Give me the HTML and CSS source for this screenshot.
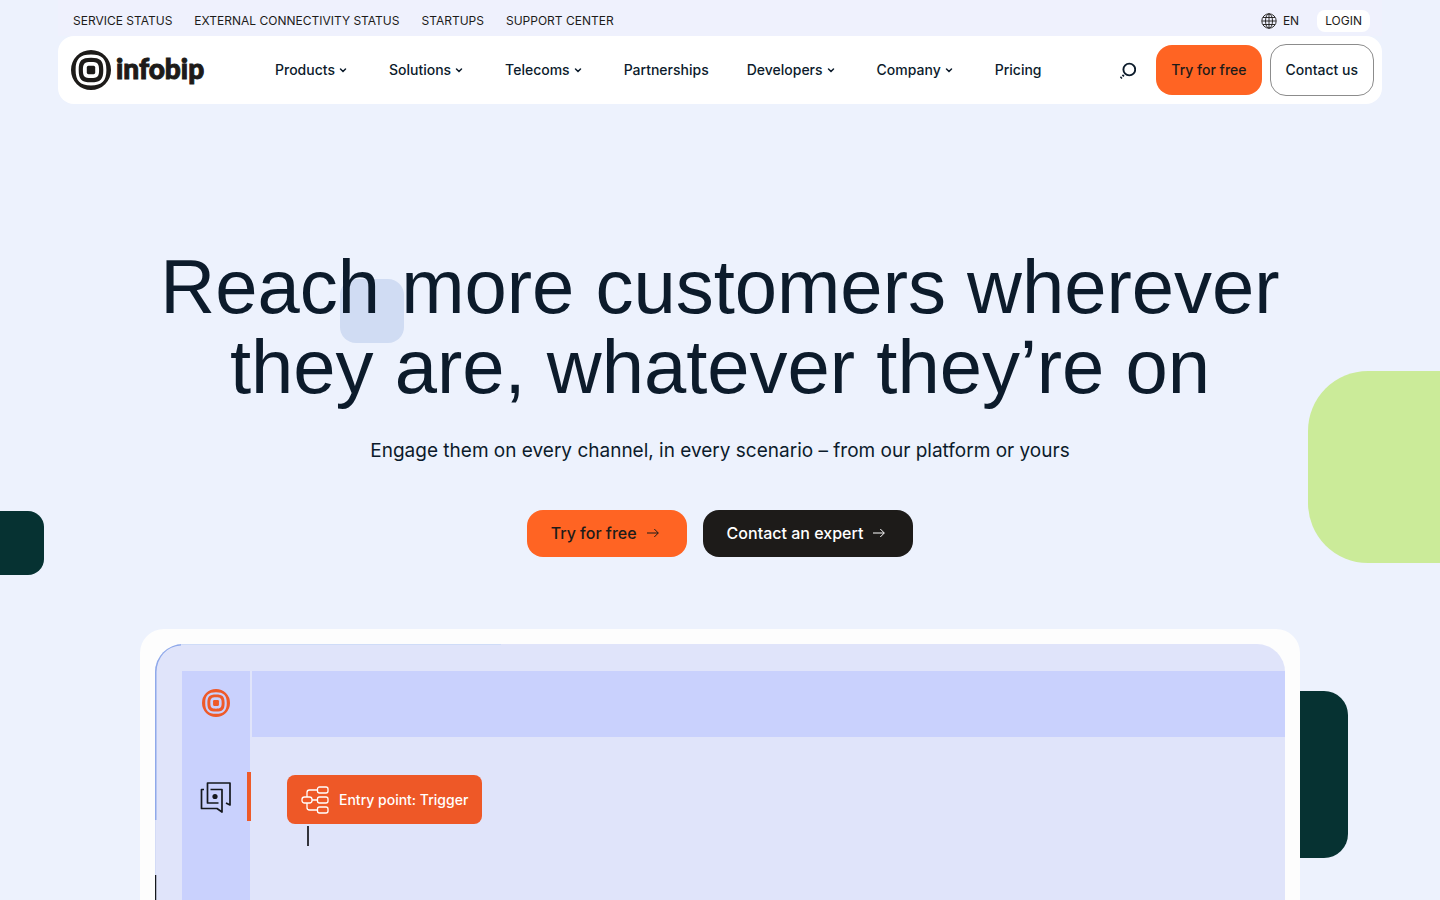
FILE: index.html
```
<!DOCTYPE html>
<html lang="en">
<head>
    <meta charset="UTF-8">
    <meta name="viewport" content="width=device-width, initial-scale=1.0">
    <title>Infobip</title>
    <link rel="stylesheet" href="styles.css">
</head>
<body>
    <svg class="sprite" aria-hidden="true">
        <symbol id="mark" viewBox="0 0 40 40">
            <path fill-rule="evenodd" fill="currentColor" d="M20 0a20 20 0 1 0 0 40a20 20 0 1 0 0-40zM20 4.6C31 4.6 35.4 9 35.4 20S31 35.4 20 35.4S4.6 31 4.6 20S9 4.6 20 4.6z"/>
            <path fill-rule="evenodd" fill="currentColor" d="M20 7.7C29.5 7.7 32.3 10.5 32.3 20S29.5 32.3 20 32.3S7.7 29.5 7.7 20S10.5 7.7 20 7.7zM20 11.9C13.5 11.9 11.9 13.5 11.9 20S13.5 28.1 20 28.1S28.1 26.5 28.1 20S26.5 11.9 20 11.9z"/>
            <rect x="15.8" y="15.8" width="8.4" height="8.4" rx="1.6" fill="currentColor"/>
        </symbol>
        <symbol id="chevron" viewBox="0 0 16 16">
            <path d="M5.5 7L8 9.5L10.5 7" fill="none" stroke="currentColor" stroke-width="1.5" stroke-linecap="round"/>
        </symbol>
        <symbol id="arrow" viewBox="0 0 12 12">
            <path d="M0 6H11.2M7.3 2L11.3 6L7.3 10" fill="none" stroke="currentColor"/>
        </symbol>
    </svg>

    <div class="page">
        <!-- Top Bar -->
        <div class="top-bar">
            <div class="top-links">
                <a href="#">SERVICE STATUS</a>
                <a href="#">EXTERNAL CONNECTIVITY STATUS</a>
                <a href="#">STARTUPS</a>
                <a href="#">SUPPORT CENTER</a>
            </div>
            <div class="top-actions">
                <button class="language">
                    <svg width="16" height="16" viewBox="0 0 16 16" fill="none" stroke="currentColor" stroke-width="0.9">
                        <circle cx="8" cy="8" r="7.2"/>
                        <ellipse cx="8" cy="8" rx="3.5" ry="7.2"/>
                        <path d="M8 1V15M1 8H15M2 4.5H14M2 11.5H14"/>
                    </svg>
                    EN
                </button>
                <a href="#" class="login">LOGIN</a>
            </div>
        </div>

        <!-- Header Section -->
        <header>
            <a href="#" class="logo">
                <svg width="40" height="40"><use href="#mark"/></svg>
                <span>infobip</span>
            </a>
            <nav>
                <a href="#">Products<svg width="16" height="16"><use href="#chevron"/></svg></a>
                <a href="#">Solutions<svg width="16" height="16"><use href="#chevron"/></svg></a>
                <a href="#">Telecoms<svg width="16" height="16"><use href="#chevron"/></svg></a>
                <a href="#">Partnerships</a>
                <a href="#">Developers<svg width="16" height="16"><use href="#chevron"/></svg></a>
                <a href="#">Company<svg width="16" height="16"><use href="#chevron"/></svg></a>
                <a href="#">Pricing</a>
            </nav>
            <div class="header-actions">
                <button class="search" aria-label="Search">
                    <svg width="16" height="18" viewBox="0 0 16 18" fill="none" stroke="currentColor" stroke-width="1.9">
                        <circle cx="9.3" cy="8.5" r="5.9"/>
                        <path d="M3.8 14L2.6 15.200M1.700 16.100L0.700 17.100" stroke-width="2.200"/>
                    </svg>
                </button>
                <a href="#" class="header-button primary">Try for free</a>
                <a href="#" class="header-button outline">Contact us</a>
            </div>
        </header>

        <!-- Hero Section -->
        <main class="hero">
            <div class="shape shape-blue"></div>
            <div class="shape shape-green"></div>
            <div class="shape shape-left"></div>
            <div class="shape shape-right"></div>

            <h1>Reach more customers wherever they are, whatever they’re on</h1>
            <p>Engage them on every channel, in every scenario – from our platform or yours</p>
            <div class="hero-buttons">
                <a href="#" class="hero-button primary">Try for free <svg width="12" height="12"><use href="#arrow"/></svg></a>
                <a href="#" class="hero-button dark">Contact an expert <svg width="12" height="12"><use href="#arrow"/></svg></a>
            </div>

            <!-- Product Preview -->
            <div class="preview">
                <div class="screen">
                    <svg class="screen-edge" width="360" height="260" viewBox="0 0 360 260" fill="none">
                        <path d="M25 0.5H346" stroke="#cfdcf8"/>
                        <path d="M0.5 176V28C1 13 11 1 26 0.5" stroke="#8fa9ea" stroke-width="2"/>
                        <path d="M0.5 176V260" stroke="#d3dbf6"/>
                        <path d="M0.5 231V260" stroke="#15181d" stroke-width="1.5"/>
                    </svg>
                    <div class="sidebar">
                        <svg class="sidebar-logo" width="28" height="28"><use href="#mark"/></svg>
                        <div class="sidebar-item">
                            <svg width="32" height="32" viewBox="0 0 32 32" fill="none" stroke="#15181d" stroke-width="1.7" stroke-linejoin="round">
                                <path d="M4 8.5H1.5V27.5H17L22 31V8.5H10.5"/>
                                <path d="M18.5 22H7.5V2H30V24L26 22"/>
                                <circle cx="15" cy="15.5" r="2.6" fill="#15181d" stroke="none"/>
                            </svg>
                        </div>
                    </div>
                    <div class="workspace">
                        <div class="workspace-bar"></div>
                        <div class="canvas">
                            <div class="node">
                                <svg width="28" height="28" viewBox="0 0 28 28" fill="none" stroke="#fff" stroke-width="1.3">
                                    <rect x="1" y="11" width="10" height="6" rx="2.5"/>
                                    <rect x="16.5" y="1" width="10.5" height="6" rx="2"/>
                                    <rect x="16.5" y="11" width="10.5" height="6" rx="2"/>
                                    <rect x="16.5" y="21" width="10.5" height="6" rx="2"/>
                                    <path d="M11 14H16.5M6 11V6.5Q6 4 8.5 4H16.5M6 17V21.5Q6 24 8.5 24H16.5"/>
                                </svg>
                                <span>Entry point: Trigger</span>
                            </div>
                            <div class="connector"></div>
                        </div>
                    </div>
                </div>
            </div>
        </main>
    </div>
</body>
</html>
```
FILE: styles.css
```
/* Global Styles */
* {
    margin: 0;
    padding: 0;
    box-sizing: border-box;
}

body {
    font-family: Inter, "Liberation Sans", sans-serif;
    background-color: #edf2fd;
    color: #0c1b2b;
}

a {
    color: inherit;
    text-decoration: none;
}

button {
    font: inherit;
    color: inherit;
    background: none;
    border: none;
    cursor: pointer;
}

svg {
    display: block;
    flex-shrink: 0;
}

.sprite {
    position: absolute;
    width: 0;
    height: 0;
}

.page {
    height: 100vh;
    overflow: hidden;
}

/* Top Bar */
.top-bar {
    display: flex;
    justify-content: space-between;
    align-items: center;
    height: 36px;
    margin: 0 58px;
    padding: 5px 12px 0 15px;
    background-color: #eff1fd;
    color: #1d1b19;
    font-size: 12px;
}

.top-links {
    display: flex;
    gap: 22px;
}

.top-actions {
    display: flex;
    align-items: center;
    gap: 18px;
}

.language {
    display: flex;
    align-items: center;
    gap: 6px;
}

.login {
    padding: 0 8px;
    background-color: #fff;
    border-radius: 8px;
    line-height: 22px;
}

/* Header */
header {
    display: flex;
    align-items: center;
    height: 68px;
    margin: 0 58px;
    padding: 0 8px 0 13px;
    background-color: #fff;
    border-radius: 16px;
    font-size: 14px;
    font-weight: 500;
}

.logo {
    display: flex;
    align-items: center;
    gap: 5px;
    width: 204px;
    color: #1d1b19;
}

.logo span {
    font-family: Lato, Inter, sans-serif;
    font-size: 28px;
    font-weight: 900;
    line-height: 30px;
    padding-bottom: 4px;
    -webkit-text-stroke: 1px #1d1b19;
}

nav {
    display: flex;
    gap: 38px;
}

nav a {
    display: flex;
    align-items: center;
    line-height: 18px;
}

.header-actions {
    display: flex;
    align-items: center;
    gap: 8px;
    margin-left: auto;
}

.search {
    margin-right: 12px;
}

.header-button {
    padding: 0 15px;
    border-radius: 16px;
    line-height: 50px;
}

.primary {
    background-color: #ff6423;
    color: #1d1b19;
}

.outline {
    border: 1px solid #8c8c8c;
}

/* Hero */
.hero {
    position: relative;
    z-index: 0;
    display: flex;
    flex-direction: column;
    align-items: center;
    padding: 143px 140px 0;
    text-align: center;
}

.hero h1 {
    max-width: 1160px;
    font-family: "Liberation Sans", Arial, sans-serif;
    font-size: 76px;
    font-weight: 400;
    line-height: 80px;
}

.hero p {
    margin-top: 28px;
    font-size: 19px;
    line-height: 32px;
}

.hero-buttons {
    display: flex;
    gap: 16px;
    margin-top: 43px;
}

.hero-button {
    display: flex;
    align-items: center;
    gap: 10px;
    height: 47px;
    padding: 0 28px 1px 24px;
    border-radius: 16px;
    font-size: 16px;
    font-weight: 500;
    line-height: 20px;
}

.dark {
    background-color: #1d1b19;
    color: #fff;
}

/* Background shapes */
.shape {
    position: absolute;
    z-index: -1;
}

.shape-blue {
    top: 175px;
    left: 340px;
    width: 64px;
    height: 64px;
    border-radius: 16px;
    background-color: #d0dcf3;
}

.shape-green {
    top: 267px;
    right: 0;
    width: 132px;
    height: 192px;
    border-radius: 60px 0 0 60px;
    background-color: #cbeb99;
}

.shape-left {
    top: 407px;
    left: 0;
    width: 44px;
    height: 64px;
    border-radius: 0 16px 16px 0;
    background-color: #063232;
}

.shape-right {
    top: 587px;
    right: 92px;
    width: 168px;
    height: 167px;
    border-radius: 24px;
    background-color: #063232;
}

/* Product Preview */
.preview {
    width: 100%;
    margin-top: 72px;
    padding: 15px;
    background-color: #fdfdfd;
    border-radius: 24px;
}

.screen {
    position: relative;
    display: flex;
    gap: 2px;
    height: 636px;
    padding: 27px 0 0 27px;
    background-color: #e0e4fa;
    border-radius: 28px;
    overflow: hidden;
}

.screen-edge {
    position: absolute;
    top: 0;
    left: 0;
}

.sidebar {
    display: flex;
    flex-direction: column;
    align-items: center;
    width: 68px;
    padding-top: 18px;
    background-color: #c9d1fd;
}

.sidebar-logo {
    color: #ee5a29;
}

.sidebar-item {
    position: relative;
    display: flex;
    align-items: center;
    justify-content: center;
    width: 100%;
    height: 49px;
    margin-top: 55px;
}

.sidebar-item::after {
    content: "";
    position: absolute;
    top: 0;
    right: -1px;
    width: 4px;
    height: 49px;
    background-color: #ee5a29;
}

.workspace {
    flex: 1;
}

.workspace-bar {
    height: 66px;
    background-color: #c9d1fd;
}

.canvas {
    display: flex;
    flex-direction: column;
    align-items: flex-start;
    gap: 2px;
    padding: 38px 35px;
}

.node {
    display: flex;
    align-items: center;
    gap: 10px;
    height: 49px;
    padding: 0 14px;
    background-color: #ee5827;
    border-radius: 8px;
    color: #fff;
    font-size: 14px;
    font-weight: 500;
}

.connector {
    width: 2px;
    height: 20px;
    margin-left: 20px;
    background-color: #33343c;
}
```
